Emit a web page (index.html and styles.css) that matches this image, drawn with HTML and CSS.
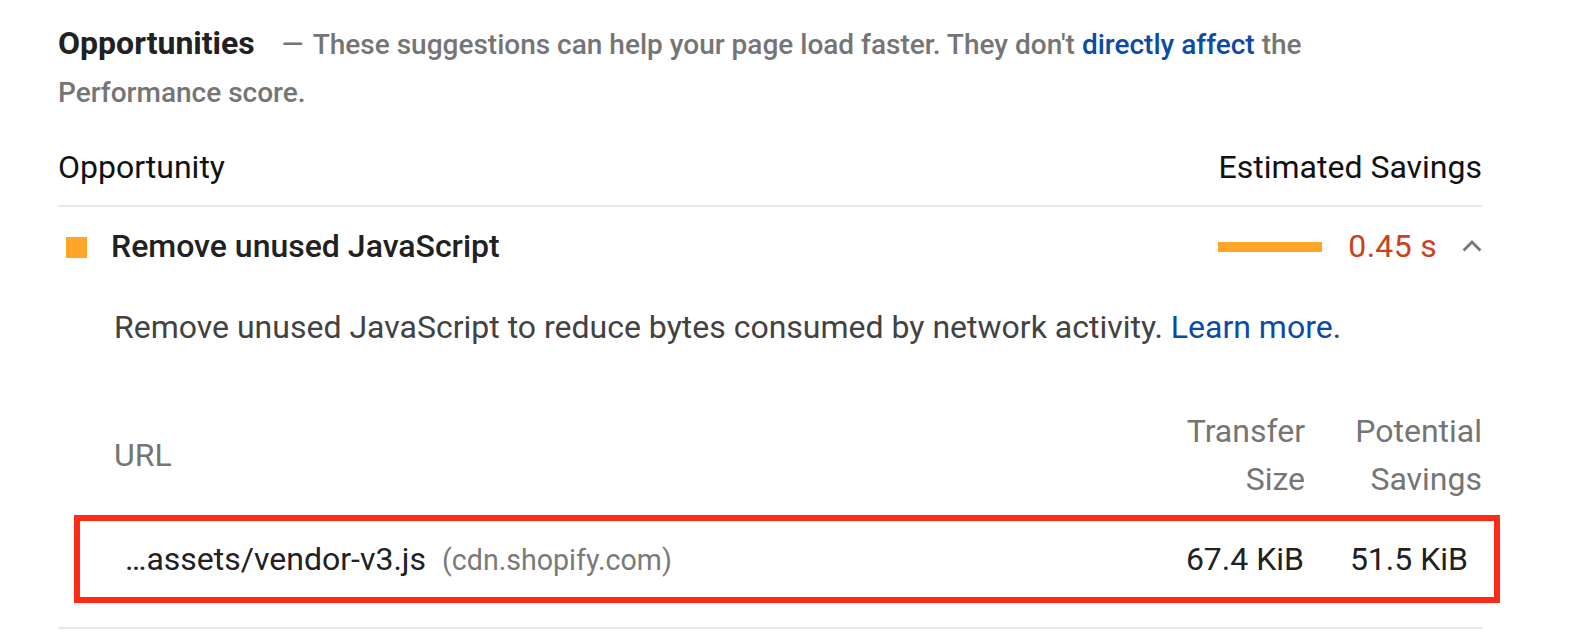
FILE: index.html
```html
<!DOCTYPE html>
<html lang="en">
<head>
<meta charset="utf-8">
<title>Opportunities</title>
<link rel="stylesheet" href="styles.css">
</head>
<body>
<section class="group">
  <div class="group-header"><span class="group-title">Opportunities</span><span class="group-desc"><span class="dash">—</span> These suggestions can help your page load faster. They don't <a class="link">directly affect</a> the Performance score.</span></div>

  <div class="table-head">
    <span>Opportunity</span>
    <span>Estimated Savings</span>
  </div>

  <div class="audit">
    <div class="audit-summary">
      <span class="score-icon"></span>
      <span class="audit-title">Remove unused JavaScript</span>
      <span class="bar"></span>
      <span class="display">0.45 s</span>
      <svg class="chevron" viewBox="0 0 20 12" width="20" height="12" aria-hidden="true"><polyline points="1.6,10.4 10,2 18.4,10.4" fill="none" stroke="#757575" stroke-width="2.8"/></svg>
    </div>

    <div class="audit-details">
      <p class="audit-desc">Remove unused JavaScript to reduce bytes consumed by network activity. <a class="link">Learn more</a>.</p>

      <div class="details-head">
        <div class="th-url">URL</div>
        <div class="th-num th-size">Transfer Size</div>
        <div class="th-num th-savings">Potential Savings</div>
      </div>

      <div class="details-row">
        <div class="td-url"><span class="url-path">…assets/vendor-v3.js</span><span class="url-host">(cdn.shopify.com)</span></div>
        <div class="td-num td-size">67.4 KiB</div>
        <div class="td-num td-savings">51.5 KiB</div>
      </div>
    </div>
  </div>
</section>
</body>
</html>
```

FILE: styles.css
```css
body {
  margin: 0;
  background: #ffffff;
  color: #212121;
  font-family: Roboto, "Liberation Sans", sans-serif;
}

.group {
  width: 1424px;
  margin-left: 58px;
  padding-top: 19px;
}

.group-header {
  max-width: 1340px;
  font-size: 28px;
  line-height: 48px;
  font-weight: 500;
  color: #757575;
}

.group-title {
  font-size: 32px;
  font-weight: 700;
  color: #212121;
}

.group-desc {
  margin-left: 27px;
}

.dash {
  margin-right: 3px;
}

.link {
  color: #0b4aa5;
  text-decoration: none;
}

.table-head {
  display: flex;
  justify-content: space-between;
  margin-top: 26px;
  padding-bottom: 14px;
  border-bottom: 2px solid #e8e8e8;
  font-size: 32px;
  line-height: 48px;
  color: #111111;
}

.audit {
  padding-bottom: 24px;
  border-bottom: 2px solid #e8e8e8;
}

.audit-summary {
  display: flex;
  align-items: center;
  padding-top: 15px;
  font-size: 32px;
  line-height: 48px;
}

.score-icon {
  width: 21px;
  height: 21px;
  margin: 3px 24px 0 8px;
  background: #ffa52a;
}

.audit-title {
  flex: 1;
  font-weight: 500;
  color: #212121;
}

.bar {
  width: 104px;
  height: 10px;
  margin-top: 2px;
  margin-right: 26px;
  background: #ffa52a;
}

.display {
  color: #c9421a;
  letter-spacing: 0.3px;
}

.chevron {
  margin: 0 0 0 25px;
}

.audit-details {
  padding-left: 56px;
  font-size: 32px;
  line-height: 48px;
}

.audit-desc {
  margin: 33px 0 0;
  color: #424242;
}

.details-head {
  display: flex;
  align-items: center;
  margin-top: 56px;
  color: #757575;
}

.th-url {
  flex: 1;
}

.th-num,
.td-num {
  text-align: right;
}

.th-size {
  width: 130px;
}

.th-savings {
  width: 177px;
}

.details-row {
  display: flex;
  margin: 12px -18px 0 -40px;
  padding: 14px 26px 13px 45px;
  border: 6px solid #fd2b17;
  color: #212121;
}

.td-url {
  flex: 1;
}

.url-host {
  margin-left: 16px;
  font-size: 28.6px;
  color: #7a7a7a;
}

.td-size {
  width: 130px;
}

.td-savings {
  width: 164px;
}
```
